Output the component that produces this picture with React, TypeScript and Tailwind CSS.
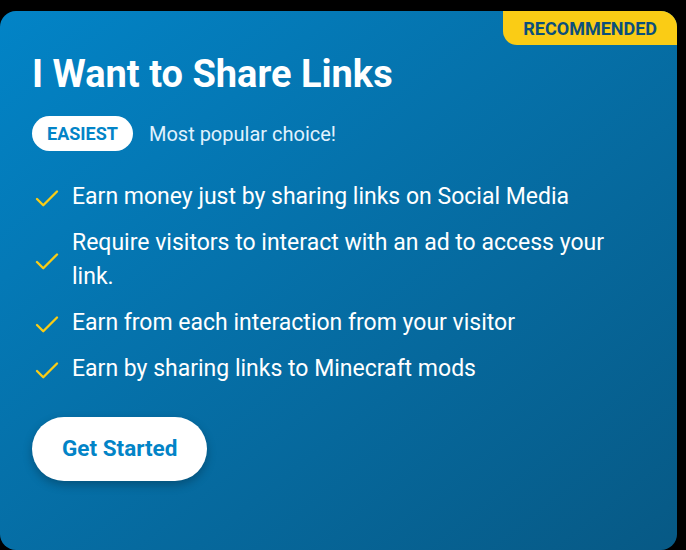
import React from "react";

const Check = () => (
  <svg width="30" height="30" viewBox="0 0 24 24" fill="none" stroke="#facc15" strokeWidth="1.9" strokeLinecap="round" strokeLinejoin="round" className="shrink-0 mt-[3px]">
    <path d="M20 6 9 17l-5-5" />
  </svg>
);

const items = [
  "Earn money just by sharing links on Social Media",
  "Require visitors to interact with an ad to access your link.",
  "Earn from each interaction from your visitor",
  "Earn by sharing links to Minecraft mods",
];

export default function App() {
  return (
    <div className="w-[686px] h-[550px] bg-black pt-[11px] pr-[9px] overflow-hidden" style={{ fontFamily: "Roboto, sans-serif" }}>
      <div className="relative h-[539px] rounded-[16px] bg-gradient-to-br from-[#0284c7] to-[#075985] pl-8 pr-8 pt-[40px]">
        <div className="absolute top-0 right-0 h-[34px] px-[20px] flex items-center bg-[#facc15] text-[#0b4f7c] font-bold text-[18px] rounded-tr-[16px] rounded-bl-[14px]">
          RECOMMENDED
        </div>
        <h1 className="text-white font-bold text-[38px] leading-[46px]">I Want to Share Links</h1>
        <div className="flex items-center gap-[16px] mt-[19px]">
          <span className="h-[35px] px-[15px] rounded-full bg-white text-[#0284c7] font-bold text-[18px] flex items-center">EASIEST</span>
          <span className="text-[#e0f2fe] text-[20px]">Most popular choice!</span>
        </div>
        <ul className="mt-[29px] flex flex-col gap-[12px] w-[600px]">
          {items.map((t) => (
            <li key={t} className="flex items-center gap-[10px] text-white text-[23px] leading-[34px]">
              <Check />
              <span>{t}</span>
            </li>
          ))}
        </ul>
        <button className="mt-[31px] h-[64px] px-[30px] rounded-full bg-white text-[#0284c7] font-bold text-[22.5px] shadow-[0_4px_10px_rgba(0,0,0,0.25)]">
          Get Started
        </button>
      </div>
    </div>
  );
}
